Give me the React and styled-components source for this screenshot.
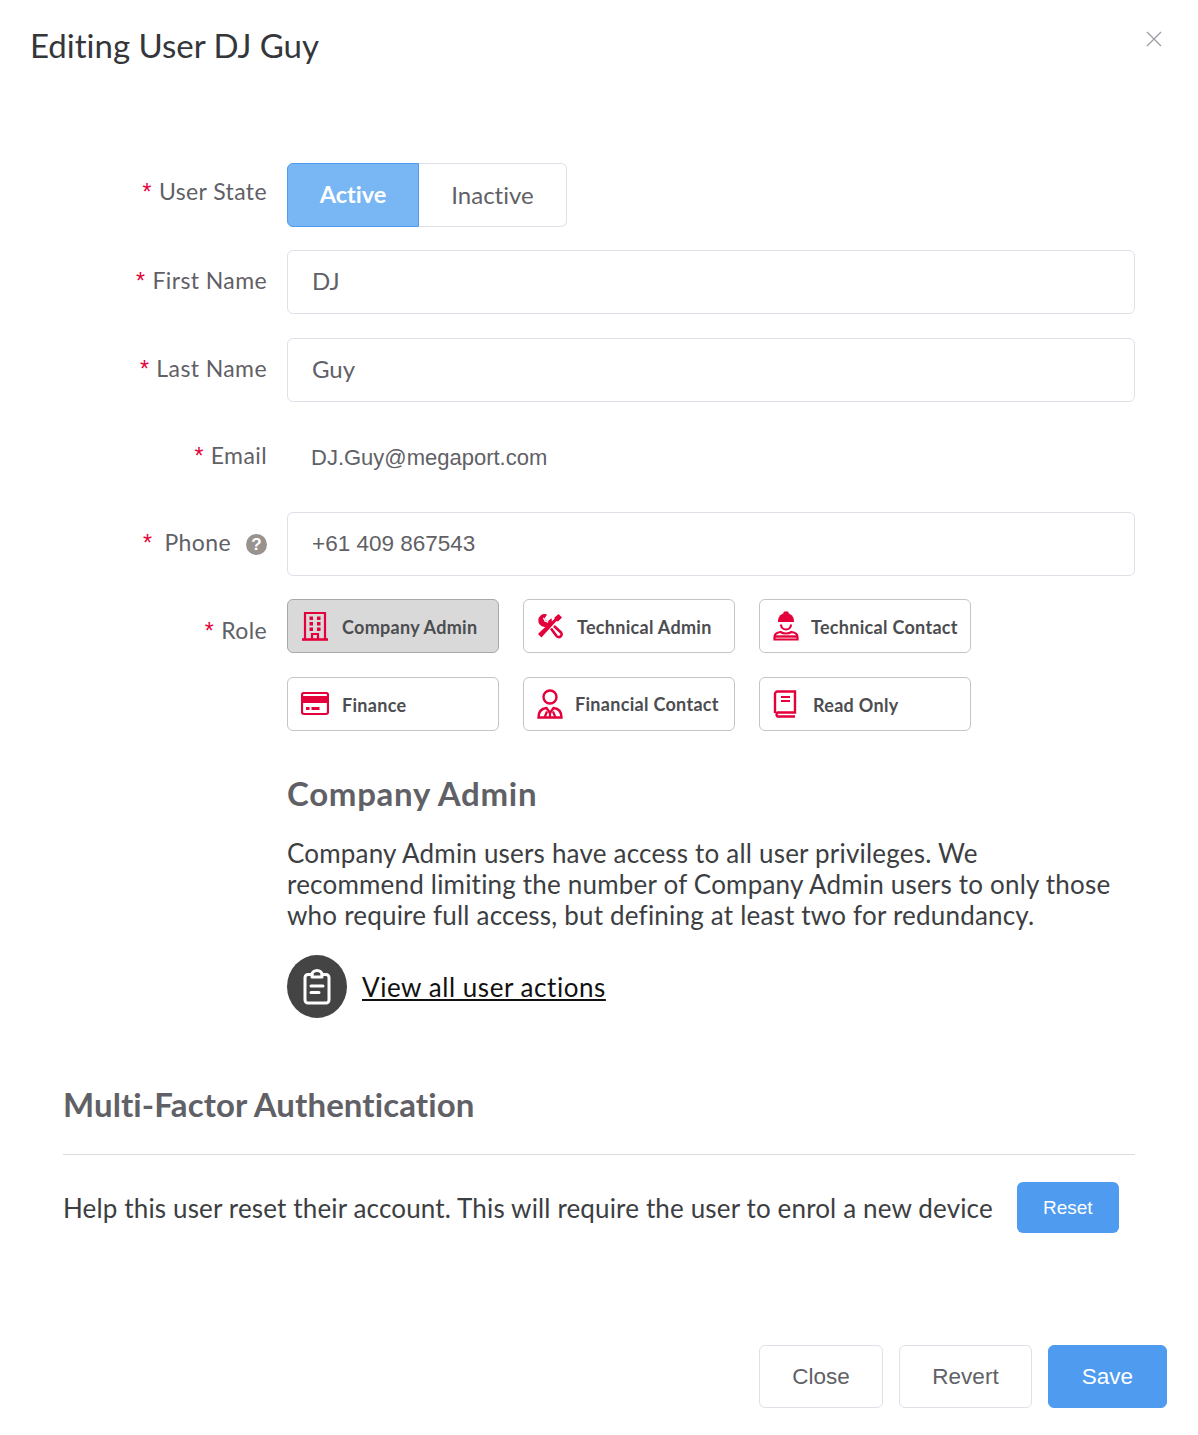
import styled, { createGlobalStyle } from "styled-components";

const GlobalStyle = createGlobalStyle`
  html, body { margin: 0; padding: 0; background: #ffffff; }
  body {
    font-family: "Lato", "Open Sans", sans-serif;
    font-variant-ligatures: none;
  }
`;

const RED = "#e4003a";

const BuildingIcon = () => (
  <svg width="28" height="30" viewBox="0 0 28 30" fill="none">
    <path d="M4 28V2h20v26" stroke={RED} strokeWidth="2.2" />
    <path d="M1 28.5h26" stroke={RED} strokeWidth="2.6" />
    <path d="M11 28v-5h6v5" stroke={RED} strokeWidth="2.2" />
    <g fill={RED}>
      <rect x="8.500" y="5.500" width="3.500" height="3.500" />
      <rect x="16" y="5.500" width="3.500" height="3.500" />
      <rect x="8.500" y="11" width="3.500" height="3.500" />
      <rect x="16" y="11" width="3.500" height="3.500" />
      <rect x="8.500" y="16.500" width="3.500" height="3.500" />
      <rect x="16" y="16.500" width="3.500" height="3.500" />
    </g>
  </svg>
);

const ToolsIcon = () => (
  <svg width="26" height="26" viewBox="0 0 26 26" fill="none">
    <path d="M21.500 1 L25 4.500 L21 8.500 L19.500 8 L8 20.500 L4.500 24.500 L1 21 L5 17 L17.500 6 L17.500 4.500 Z" fill={RED} />
    <path d="M2 7.500a5.500 5.500 0 0 1 7-5.500L7 5l1 3 3 1 3-2.500a5.500 5.500 0 0 1-7 6.500A5.500 5.500 0 0 1 2 7.500z" fill={RED} stroke={RED} strokeWidth="1.400" />
    <path d="M6.500 4.800l1.500 3.200 3.200 1.200" stroke="#ffffff" strokeWidth="1.400" />
    <path d="M14 15.500l5.500 7.500a2.700 2.700 0 0 0 4.500-3.500L17 13" stroke={RED} strokeWidth="2.600" />
  </svg>
);

const WorkerIcon = () => (
  <svg width="26" height="30" viewBox="0 0 26 30" fill="none">
    <path d="M5 10a8 8 0 0 1 16 0v1H5z" fill={RED} />
    <rect x="10.500" y="0.500" width="5" height="5" rx="1" fill={RED} />
    <path d="M8 13.500a5 5 0 0 0 10 0" stroke={RED} strokeWidth="2.200" />
    <path d="M1.500 28.500v-2.500c0-3 2.500-4.500 6-5 3 2 8 2 11 0 3.500.5 6 2 6 5v2.500z" stroke={RED} strokeWidth="2.200" />
    <path d="M1 25.500h24" stroke={RED} strokeWidth="2.400" />
  </svg>
);

const CardIcon = () => (
  <svg width="28" height="24" viewBox="0 0 28 24" fill="none">
    <rect x="1" y="1" width="26" height="21" rx="2" stroke={RED} strokeWidth="2.200" />
    <rect x="1" y="4" width="26" height="7" fill={RED} />
    <rect x="5" y="15" width="3.500" height="3" fill={RED} />
    <rect x="10.500" y="15" width="8" height="3" fill={RED} />
  </svg>
);

const PersonIcon = () => (
  <svg width="26" height="30" viewBox="0 0 26 30" fill="none">
    <circle cx="13" cy="8" r="6.500" stroke={RED} strokeWidth="2.400" />
    <path d="M1.500 28.500c0-6 3-9 8-9.500l3.500 5 3.500-5c5 .5 8 3.500 8 9.500z" stroke={RED} strokeWidth="2.400" />
    <path d="M7.500 28.500l2.500-6M18.500 28.500l-2.500-6M13 24v4.500" stroke={RED} strokeWidth="2.200" />
  </svg>
);

const BookIcon = () => (
  <svg width="24" height="28" viewBox="0 0 24 28" fill="none">
    <path d="M2 23V4a2.500 2.500 0 0 1 2.500-2.500H22V22.500H4.500A2.500 2.500 0 0 0 4.500 26.500H22" stroke={RED} strokeWidth="2.400" />
    <path d="M8 7h9M8 11h9" stroke={RED} strokeWidth="2.200" />
  </svg>
);

const ClipboardIcon = () => (
  <svg width="28" height="36" viewBox="0 0 28 36" fill="none" stroke="#ffffff" strokeWidth="3" strokeLinecap="round" strokeLinejoin="round">
    <path d="M9 5.500H5a3 3 0 0 0-3 3v22.500a3 3 0 0 0 3 3h18a3 3 0 0 0 3-3V8.500a3 3 0 0 0-3-3h-4" />
    <path d="M9 8V5.500a5 4 0 0 1 10 0V8z" />
    <path d="M8 17h12M8 23.500h8" />
  </svg>
);

const ROLES = [
  { name: "Company Admin", icon: <BuildingIcon />, selected: true, gap: 13 },
  { name: "Technical Admin", icon: <ToolsIcon />, gap: 14 },
  { name: "Technical Contact", icon: <WorkerIcon />, gap: 12 },
  { name: "Finance", icon: <CardIcon />, gap: 13 },
  { name: "Financial Contact", icon: <PersonIcon />, gap: 12, lift: true },
  { name: "Read Only", icon: <BookIcon />, gap: 16 },
];

const App = () => (
  <Page>
    <GlobalStyle />
    <Header>
      <Title>Editing User DJ Guy</Title>
      <CloseIcon width="16" height="16" viewBox="0 0 16 16">
        <path d="M1 1l14 14M15 1L1 15" stroke="#9a9da3" strokeWidth="1.300" fill="none" />
      </CloseIcon>
    </Header>

    <Form>
      <Label $top={15}>
        <Star>*</Star>User State
      </Label>
      <Toggle>
        <ToggleItem $active>Active</ToggleItem>
        <ToggleItem>Inactive</ToggleItem>
      </Toggle>

      <Label>
        <Star>*</Star>First Name
      </Label>
      <Input>DJ</Input>

      <Label>
        <Star>*</Star>Last Name
      </Label>
      <Input>Guy</Input>

      <Label $top={16}>
        <Star>*</Star>Email
      </Label>
      <StaticValue>DJ.Guy@megaport.com</StaticValue>

      <Label>
        <Star $wide>*</Star>Phone
        <HelpDot>?</HelpDot>
      </Label>
      <Input $plain>+61 409 867543</Input>

      <Label $top={18}>
        <Star>*</Star>Role
      </Label>
      <RoleGrid>
        {ROLES.map((role) => (
          <RoleButton key={role.name} $selected={role.selected} $gap={role.gap}>
            <RoleIcon>{role.icon}</RoleIcon>
            <RoleName $lift={role.lift}>{role.name}</RoleName>
          </RoleButton>
        ))}
      </RoleGrid>

      <RoleInfo>
        <RoleHeading>Company Admin</RoleHeading>
        <RoleText>
          Company Admin users have access to all user privileges. We
          <br />
          recommend limiting the number of Company Admin users to only those
          <br />
          who require full access, but defining at least two for redundancy.
        </RoleText>
        <ActionRow>
          <ActionCircle>
            <ClipboardIcon />
          </ActionCircle>
          <ActionLink>View all user actions</ActionLink>
        </ActionRow>
      </RoleInfo>
    </Form>

    <MfaSection>
      <MfaHeading>Multi-Factor Authentication</MfaHeading>
      <MfaRow>
        <MfaText>Help this user reset their account. This will require the user to enrol a new device</MfaText>
        <ResetButton>Reset</ResetButton>
      </MfaRow>
    </MfaSection>

    <Footer>
      <FooterButton $width={124}>Close</FooterButton>
      <FooterButton $width={133}>Revert</FooterButton>
      <FooterButton $width={119} $primary>Save</FooterButton>
    </Footer>
  </Page>
);

export default App;

const Page = styled.div`
  box-sizing: border-box;
  width: 1198px;
  height: 1435px;
  background: #ffffff;
  color: #5f6166;
  overflow: hidden;
`;

const Header = styled.div`
  display: flex;
  justify-content: space-between;
  align-items: flex-start;
  height: 163px;
  padding: 24px 36px 0 30px;
  box-sizing: border-box;
`;

const Title = styled.h1`
  margin: 0;
  font-size: 33px;
  line-height: 42px;
  font-weight: 400;
  color: #34363a;
`;

const CloseIcon = styled.svg`
  margin-top: 7px;
`;

const Form = styled.div`
  display: grid;
  grid-template-columns: 204px 848px;
  column-gap: 20px;
  row-gap: 24px;
  padding-left: 63px;
`;

const Label = styled.div`
  font-size: 23px;
  line-height: 26px;
  letter-spacing: 0.4px;
  text-align: right;
  padding-top: ${(p) => p.$top ?? 17}px;
  color: #5f6166;
  white-space: nowrap;
`;

const Star = styled.span`
  font-family: "Liberation Sans", sans-serif;
  color: ${RED};
  margin-right: ${(p) => (p.$wide ? 12 : 7)}px;
`;

const HelpDot = styled.span`
  display: inline-block;
  width: 21px;
  height: 21px;
  margin-left: 15px;
  border-radius: 50%;
  background: #99928f;
  color: #ffffff;
  font-family: "Liberation Sans", sans-serif;
  font-size: 17px;
  font-weight: 700;
  line-height: 21px;
  letter-spacing: 0;
  text-align: center;
  vertical-align: 1px;
`;

const Toggle = styled.div`
  display: flex;
  width: 280px;
  height: 64px;
  margin-bottom: -1px;
`;

const ToggleItem = styled.div`
  box-sizing: border-box;
  display: flex;
  align-items: center;
  justify-content: center;
  padding-bottom: 2px;
  font-size: ${(p) => (p.$active ? 23.5 : 24)}px;
  width: ${(p) => (p.$active ? 132 : 148)}px;
  color: ${(p) => (p.$active ? "#ffffff" : "#5f6166")};
  font-weight: ${(p) => (p.$active ? 700 : 400)};
  background: ${(p) => (p.$active ? "#78b6f4" : "#ffffff")};
  border: 1px solid ${(p) => (p.$active ? "#4e9bef" : "#dfe1e8")};
  border-left-width: ${(p) => (p.$active ? 1 : 0)}px;
  border-radius: ${(p) => (p.$active ? "6px 0 0 6px" : "0 6px 6px 0")};
`;

const Input = styled.div`
  box-sizing: border-box;
  height: 64px;
  margin-bottom: ${(p) => (p.$plain ? -1 : 0)}px;
  display: flex;
  align-items: center;
  padding: 0 0 ${(p) => (p.$plain ? 1 : 4)}px 24px;
  font-size: ${(p) => (p.$plain ? 22.5 : 24)}px;
  font-family: ${(p) => (p.$plain ? '"Liberation Sans", sans-serif' : "inherit")};
  color: #5f6166;
  border: 1px solid #dfe1e8;
  border-radius: 6px;
`;

const StaticValue = styled.div`
  box-sizing: border-box;
  height: 62px;
  display: flex;
  align-items: center;
  padding: 2px 0 0 24px;
  font-family: "Liberation Sans", sans-serif;
  font-size: 22px;
  color: #5f6166;
`;

const RoleGrid = styled.div`
  display: grid;
  grid-template-columns: repeat(3, 212px);
  column-gap: 24px;
  row-gap: 24px;
`;

const RoleButton = styled.div`
  box-sizing: border-box;
  height: 54px;
  display: flex;
  align-items: center;
  gap: ${(p) => p.$gap}px;
  padding-left: 13px;
  background: ${(p) => (p.$selected ? "#d9d9d9" : "#ffffff")};
  border: 1px solid ${(p) => (p.$selected ? "#a8a8a8" : "#c4c4c4")};
  border-radius: 6px;
`;

const RoleName = styled.span`
  font-size: 18px;
  font-weight: 700;
  letter-spacing: 0.3px;
  color: #4c4d50;
  white-space: nowrap;
  margin-top: ${(p) => (p.$lift ? -1 : 1)}px;
`;

const RoleIcon = styled.span`
  display: flex;
  flex: none;
`;

const RoleInfo = styled.div`
  grid-column: 2;
  margin-top: 17px;
`;

const RoleHeading = styled.h2`
  margin: 0;
  font-size: 33px;
  line-height: 42px;
  font-weight: 700;
  letter-spacing: 0.7px;
  color: #5f6166;
`;

const RoleText = styled.p`
  margin: 24px 0 0;
  font-size: 26px;
  line-height: 31px;
  letter-spacing: 0.2px;
  color: #3c3e42;
`;

const ActionRow = styled.div`
  display: flex;
  align-items: center;
  gap: 15px;
  margin-top: 24px;
`;

const ActionCircle = styled.div`
  width: 60px;
  height: 63px;
  display: flex;
  align-items: center;
  justify-content: center;
  border-radius: 50%;
  background: #444444;
`;

const ActionLink = styled.a`
  font-size: 26px;
  line-height: 30px;
  letter-spacing: 0.55px;
  color: #111111;
  text-decoration: underline;
`;

const MfaSection = styled.div`
  margin: 65px 63px 0;
`;

const MfaHeading = styled.h2`
  margin: 0;
  height: 71px;
  border-bottom: 1px solid #dcdcdc;
  font-size: 33px;
  line-height: 42px;
  font-weight: 700;
  letter-spacing: 0.1px;
  color: #5f6166;
`;

const MfaRow = styled.div`
  display: flex;
  align-items: center;
  gap: 24px;
  margin-top: 27px;
`;

const MfaText = styled.div`
  font-size: 26px;
  letter-spacing: 0.15px;
  color: #3c3e42;
  white-space: nowrap;
`;

const ResetButton = styled.div`
  width: 102px;
  height: 51px;
  display: flex;
  align-items: center;
  justify-content: center;
  border-radius: 6px;
  background: #4e9bef;
  color: #ffffff;
  font-family: "Liberation Sans", sans-serif;
  font-size: 19px;
`;

const Footer = styled.div`
  display: flex;
  justify-content: flex-end;
  gap: 16px;
  margin-top: 112px;
  padding-right: 31px;
`;

const FooterButton = styled.div`
  box-sizing: border-box;
  width: ${(p) => p.$width}px;
  height: 63px;
  display: flex;
  align-items: center;
  justify-content: center;
  border-radius: 6px;
  border: 1px solid ${(p) => (p.$primary ? "#4e9bef" : "#dfe1e8")};
  background: ${(p) => (p.$primary ? "#4e9bef" : "#ffffff")};
  color: ${(p) => (p.$primary ? "#ffffff" : "#5f6166")};
  font-family: "Liberation Sans", sans-serif;
  font-size: 22.5px;
`;
